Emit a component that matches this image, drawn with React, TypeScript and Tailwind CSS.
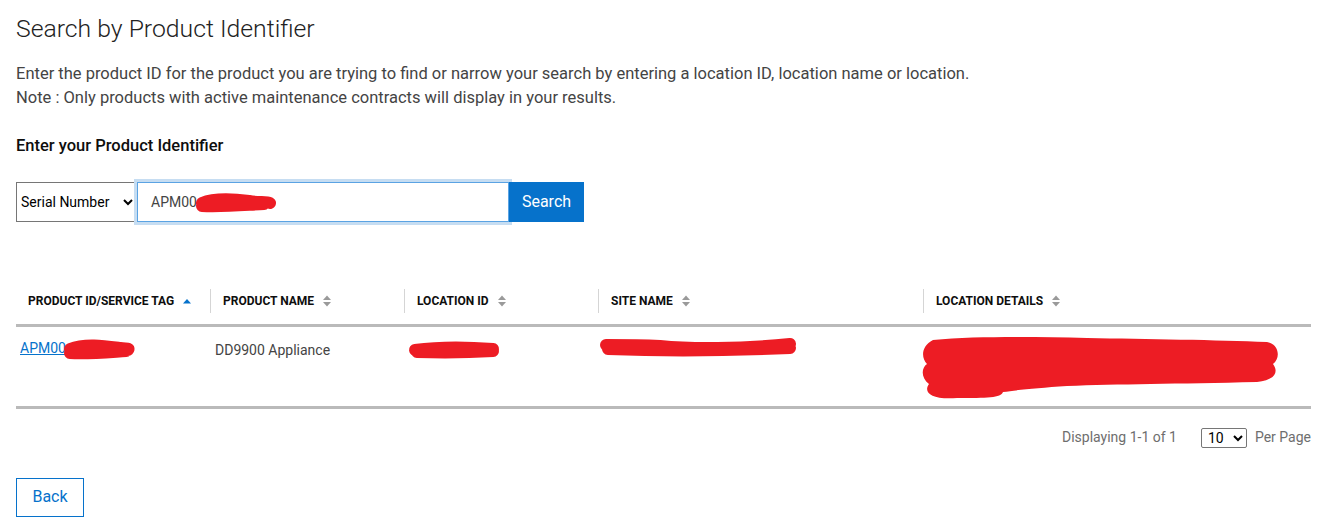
import type { ReactNode } from 'react'

function SortIcon({ active }: { active?: boolean }) {
  if (active) {
    return (
      <svg width="10" height="12" viewBox="0 0 10 12" className="ml-2 inline-block">
        <path d="M1 8.5 L5 4 L9 8.5 Z" fill="#0672cb" />
      </svg>
    )
  }
  return (
    <svg width="10" height="14" viewBox="0 0 10 14" className="ml-2 inline-block">
      <path d="M1 6 L5 1.5 L9 6 Z" fill="#9a9a9a" />
      <path d="M1 8 L5 12.5 L9 8 Z" fill="#9a9a9a" />
    </svg>
  )
}

function Redact({ w, h, d }: { w: number; h: number; d: string }) {
  return (
    <svg width={w} height={h} viewBox={`0 0 ${w} ${h}`} className="inline-block align-middle">
      <path d={d} fill="none" stroke="#ed1c24" strokeWidth="12" strokeLinecap="round" strokeLinejoin="round" />
    </svg>
  )
}

function Th({ children, width, first }: { children: ReactNode; width: string; first?: boolean }) {
  return (
    <th className={`${width} h-[42px] p-0 pt-[6px] text-left align-top`}>
      <div
        className={`flex h-6 items-center px-3 text-[12px] font-bold text-[#0e0e0e] ${first ? '' : 'border-l border-[#d5d5d5]'}`}
      >
        {children}
      </div>
    </th>
  )
}

export default function App() {
  return (
    <div className="min-h-[529px] bg-white px-4 pt-[13px] font-['Roboto',sans-serif] text-[#444]">
      <h1 className="text-[24.75px] leading-8 font-light text-[#222]">Search by Product Identifier</h1>

      <p className="mt-[17px] text-[16.5px] leading-6 text-[#444]">
        Enter the product ID for the product you are trying to find or narrow your search by entering a location ID,
        location name or location.
        <br />
        Note : Only products with active maintenance contracts will display in your results.
      </p>

      <h2 className="mt-6 text-[16.5px] leading-6 font-medium text-[#0e0e0e]">Enter your Product Identifier</h2>

      {/* Search form */}
      <div className="mt-6 flex h-10 items-stretch">
        <select className="w-[121px] border border-[#767676] pl-0 text-[14px] text-black">
          <option>Serial Number</option>
        </select>
        <div className="flex w-[372px] items-center border border-[#5aa3e3] pl-[13px] ring-[3px] ring-[#c6ddf2]">
          <span className="text-[14px] text-[#444]">APM00</span>
          <span className="-ml-[3px]">
            <Redact w={84} h={22} d="M8 11 C20 6 40 7 55 9 C65 11 72 9 76 11 M8 14 C30 15 50 13 70 12" />
          </span>
        </div>
        <button type="button" className="relative w-[75px] bg-[#0672cb] text-[16px] text-white">
          Search
        </button>
      </div>

      {/* Results table */}
      <table className="mt-[61px] w-[1295px] border-collapse">
        <thead>
          <tr className="border-b-[3px] border-[#bababa]">
            <Th width="w-[194px]" first>
              PRODUCT ID/SERVICE TAG
              <SortIcon active />
            </Th>
            <Th width="w-[194px]">
              PRODUCT NAME
              <SortIcon />
            </Th>
            <Th width="w-[194px]">
              LOCATION ID
              <SortIcon />
            </Th>
            <Th width="w-[325px]">
              SITE NAME
              <SortIcon />
            </Th>
            <Th width="w-[388px]">
              LOCATION DETAILS
              <SortIcon />
            </Th>
          </tr>
        </thead>
        <tbody>
          <tr className="h-[82px] border-b-[3px] border-[#bababa] align-top text-[14px] text-[#444]">
            <td className="pt-[11px] pl-1">
              <span className="text-[#0672cb] underline">APM00</span>
              <span className="-ml-[6px]">
                <Redact w={76} h={22} d="M10 11 C25 5 45 8 60 10 C66 11 70 10 68 12 M10 15 C30 16 50 14 66 13" />
              </span>
            </td>
            <td className="pt-[13px] pl-[5px]">DD9900 Appliance</td>
            <td className="pt-[11px] pl-[3px]">
              <Redact w={96} h={22} d="M8 12 C30 9 60 9 86 11 M10 14 C40 15 70 14 86 13" />
            </td>
            <td className="pt-[9px] pl-[2px]">
              <Redact w={200} h={22} d="M6 9 C20 9 40 9 60 10 C90 13 140 13 190 8 M8 13 C60 15 120 15 190 12" />
            </td>
            <td className="pt-[7px] pl-0">
              <svg width="370" height="66" viewBox="0 0 370 66" className="-ml-[6px] block">
                <path
                  d="M16 6 C60 2 120 3 170 4 C230 5 300 6 350 8 C362 10 364 24 356 30 C362 38 358 46 340 48 C260 50 200 50 150 52 C120 54 100 56 86 58 C84 64 70 64 40 64 C14 66 6 58 12 50 C4 44 4 34 10 30 C4 24 4 12 16 6 Z"
                  fill="#ed1c24"
                />
              </svg>
            </td>
          </tr>
        </tbody>
      </table>

      {/* Pagination */}
      <div className="mt-[17px] flex h-6 w-[1295px] items-center justify-end text-[14px] text-[#6e6e6e]">
        <span>Displaying 1-1 of 1</span>
        <select className="ml-6 h-5 w-[46px] rounded-[2px] border border-[#767676] pl-0.5 text-[14px] text-black">
          <option>10</option>
        </select>
        <span className="ml-2">Per Page</span>
      </div>

      {/* Back */}
      <button
        type="button"
        className="mt-[28px] h-[39px] w-[68px] border border-[#0672cb] text-[16px] text-[#0672cb]"
      >
        Back
      </button>
    </div>
  )
}
